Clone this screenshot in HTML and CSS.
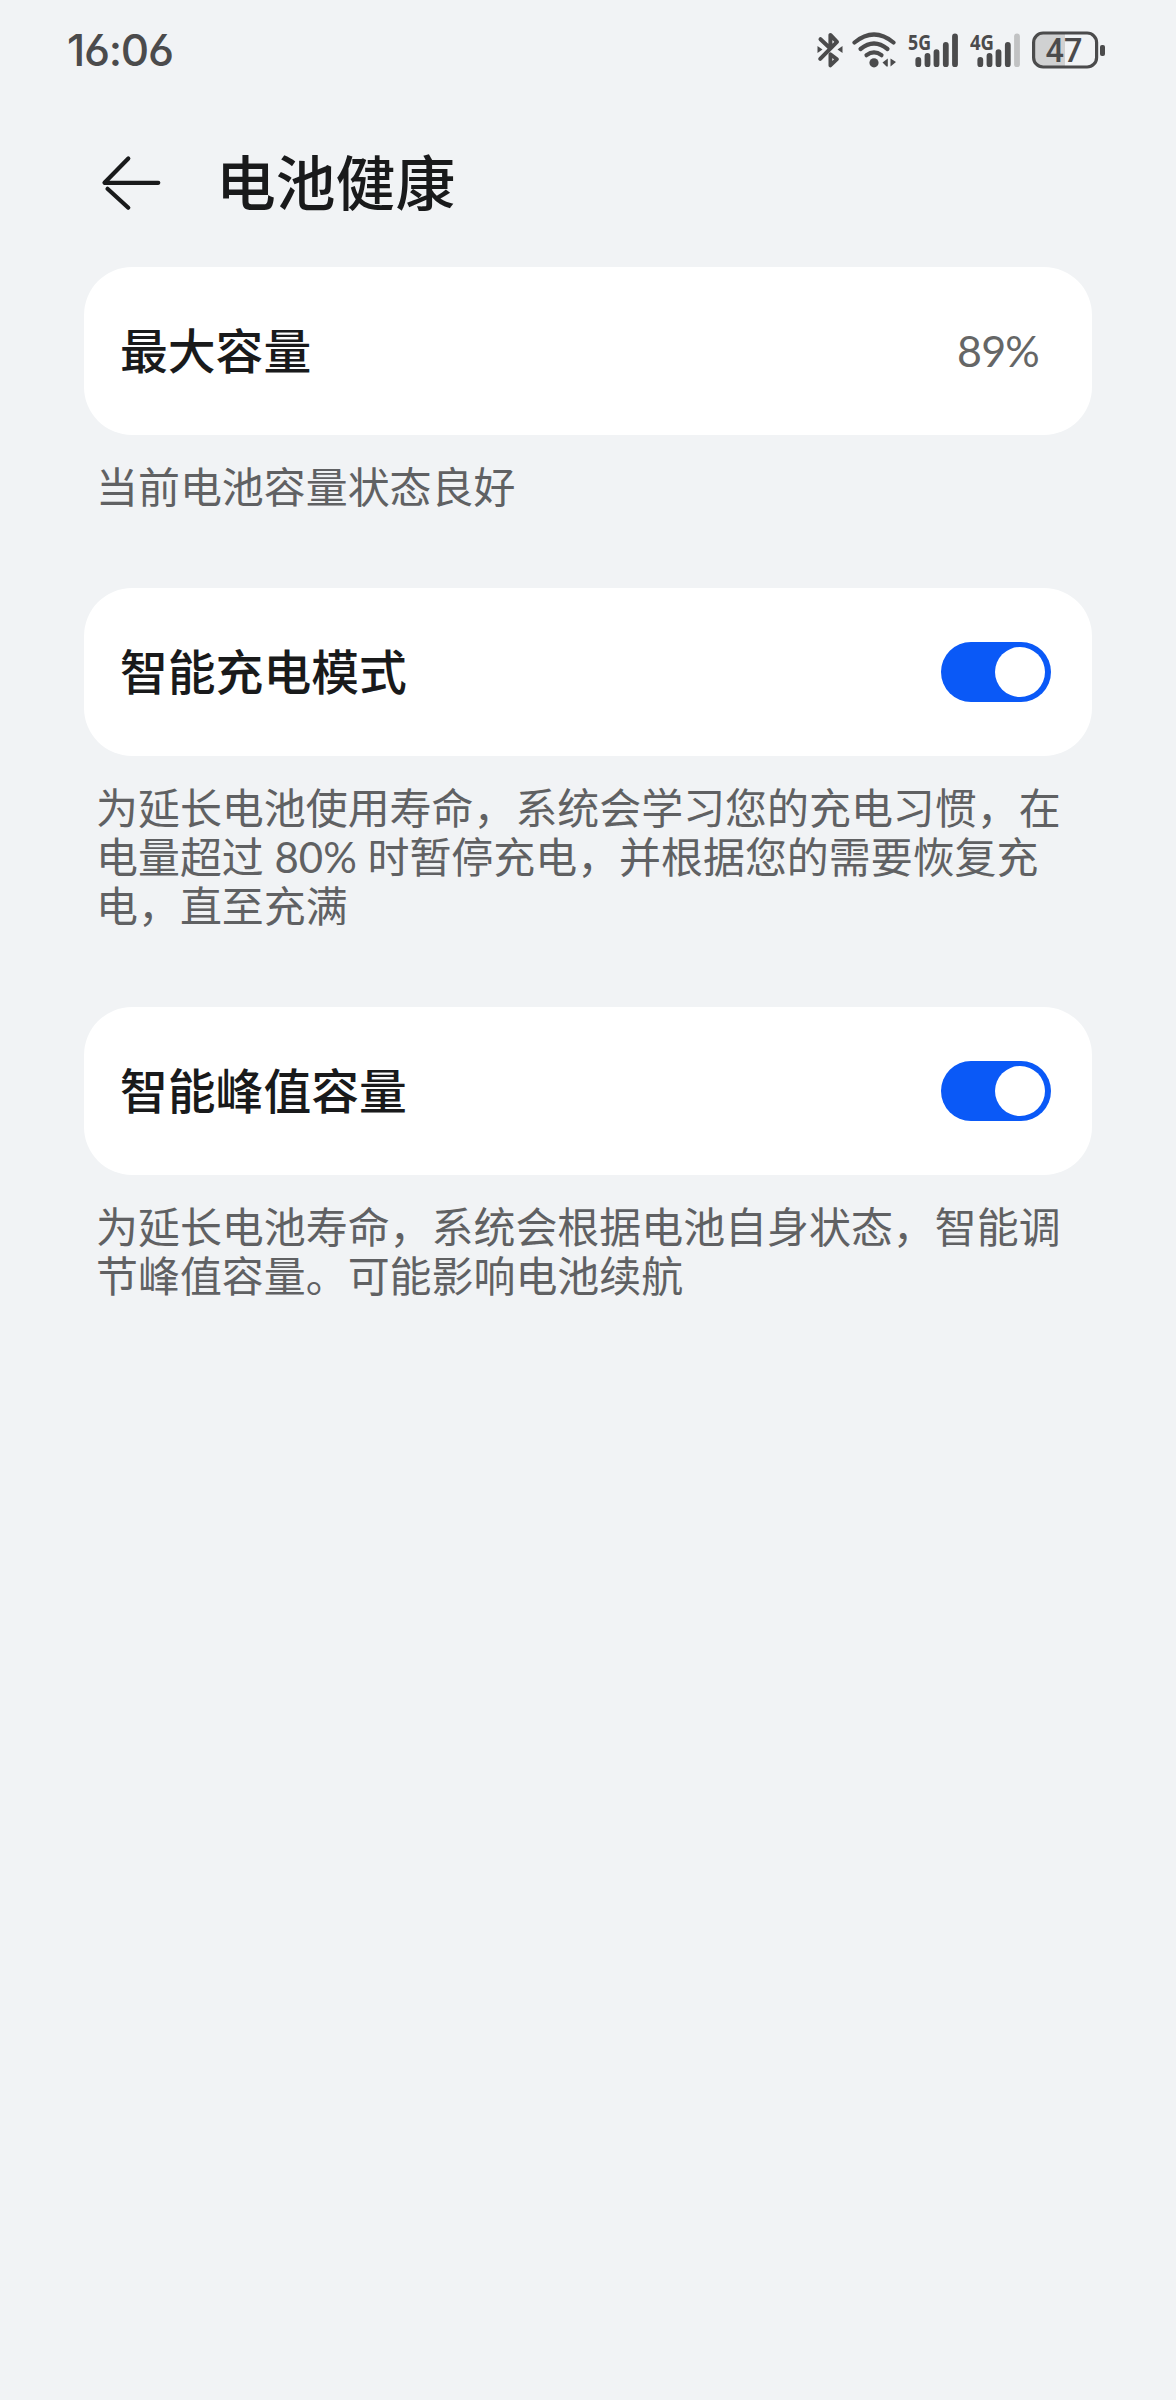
FILE: index.html
```html
<!DOCTYPE html>
<html lang="zh-CN">
<head>
<meta charset="utf-8">
<title>电池健康</title>
<link rel="stylesheet" href="styles.css">
</head>
<body>
<div class="screen">
  <header class="status-bar">
    <span class="clock">16:06</span>
    <div class="status-icons">
      <svg class="icon-bluetooth" width="26" height="38" viewBox="0 0 26 38">
        <path d="M3.200 27.800 L20 10.800 L13.400 4 V17 M3.500 8.200 L12 16.200" fill="none" stroke="#4b4b4c" stroke-width="4" stroke-linecap="round" stroke-linejoin="round"/>
        <path d="M13.400 23.200 L20 28.200 L13.400 34.400 Z" fill="none" stroke="#4b4b4c" stroke-width="3.800" stroke-linejoin="round"/>
        <path d="M0.500 15 L5.500 18.500 L0.500 22 Z M25.500 15 L20.500 18.500 L25.500 22 Z" fill="#4b4b4c"/>
      </svg>
      <svg class="icon-wifi" width="46" height="38" viewBox="0 0 46 38">
        <g fill="none" stroke="#4b4b4c" stroke-width="4.200" stroke-linecap="round">
          <path d="M2.500 11.500 Q22 -4.500 41.500 11.500"/>
          <path d="M8.500 18 Q22 7 35.500 18"/>
          <path d="M14.500 24.200 Q22 18.500 29.500 24.200"/>
        </g>
        <circle cx="22" cy="31.800" r="4.600" fill="#4b4b4c"/>
        <path d="M35.800 27.500 V35.500 H34.500 L30.500 31.500 Z M38.500 27.500 V35.500 L44 31 Z" fill="#4b4b4c"/>
      </svg>
      <svg class="icon-signal" width="52" height="54" viewBox="0 -8 52 54">
        <text class="network" x="0" y="18.500" textLength="23" lengthAdjust="spacingAndGlyphs">5G</text>
        <path d="M10.300 29 V33.200 M19.500 25 V33.200 M28.500 21.200 V33.200 M37.800 14 V33.200 M47 5.500 V33.200" stroke="#4b4b4c" stroke-width="5.800" stroke-linecap="round"/>
      </svg>
      <svg class="icon-signal" width="52" height="54" viewBox="0 -8 52 54">
        <text class="network" x="0" y="18.500" textLength="24" lengthAdjust="spacingAndGlyphs">4G</text>
        <g stroke="#4b4b4c" stroke-width="5.800" stroke-linecap="round">
          <path d="M10.300 29 V33.200 M19.500 25 V33.200 M28.500 21.200 V33.200 M37.800 14 V33.200"/>
          <path d="M47 5.500 V33.200" stroke="#c1c2c3"/>
        </g>
      </svg>
      <svg class="icon-battery" width="74" height="46" viewBox="0 -4 74 46">
        <path d="M33 2.500 H12 Q2 2.500 2 12.500 V26 Q2 36 12 36 H33 Z" fill="#d0d1d2"/>
        <rect x="1.600" y="2" width="63" height="34" rx="9.500" fill="none" stroke="#4b4b4c" stroke-width="3.200"/>
        <rect x="68" y="14" width="5" height="11" rx="2" fill="#4b4b4c"/>
        <text class="battery-level" x="32" y="30.500" text-anchor="middle">47</text>
      </svg>
    </div>
  </header>

  <div class="title-bar">
    <svg class="icon-back" width="60" height="56" viewBox="0 0 60 56">
      <path d="M27.300 3.500 L3.500 27.800 H57.300 M6.500 33.800 L27.300 52.700" fill="none" stroke="#191a1b" stroke-width="4.200" stroke-linecap="round" stroke-linejoin="round"/>
    </svg>
    <h1 class="title">电池健康</h1>
  </div>

  <main class="settings">
    <section class="group">
      <div class="card">
        <span class="label">最大容量</span>
        <span class="value">89%</span>
      </div>
      <p class="note">当前电池容量状态良好</p>
    </section>
    <section class="group">
      <div class="card">
        <span class="label">智能充电模式</span>
        <span class="switch"><span class="knob"></span></span>
      </div>
      <p class="note">为延长电池使用寿命，系统会学习您的充电习惯，在电量超过 80% 时暂停充电，并根据您的需要恢复充电，直至充满</p>
    </section>
    <section class="group">
      <div class="card">
        <span class="label">智能峰值容量</span>
        <span class="switch"><span class="knob"></span></span>
      </div>
      <p class="note">为延长电池寿命，系统会根据电池自身状态，智能调节峰值容量。可能影响电池续航</p>
    </section>
  </main>
</div>
</body>
</html>
```
FILE: styles.css
```css
* {
  box-sizing: border-box;
}

body {
  margin: 0;
  background: #f1f3f5;
  color: #191a1b;
  font-family: "Noto Sans CJK SC", sans-serif;
}

.screen {
  width: 1176px;
  min-height: 2400px;
}

.status-bar {
  display: flex;
  align-items: center;
  justify-content: space-between;
  height: 99px;
  padding: 0 70px 0 67px;
}

.clock {
  font: 500 44px/50px Inter, sans-serif;
  font-feature-settings: "cv03", "cv04";
  letter-spacing: -1.300px;
  color: #4b4b4c;
}

.status-icons {
  display: flex;
  align-items: center;
}

.icon-wifi {
  margin-left: 9px;
}

.icon-signal {
  margin-left: 10px;
}

.icon-battery {
  margin-left: 10px;
}

.network {
  font: 700 22px "Open Sans", sans-serif;
  fill: #4b4b4c;
}

.battery-level {
  font: 500 32.500px Roboto, sans-serif;
  fill: #4b4b4c;
}

.title-bar {
  display: flex;
  align-items: center;
  gap: 55px;
  height: 168px;
  padding: 0 101px;
}

.title {
  margin: 0;
  padding-bottom: 7px;
  font-size: 59.800px;
  font-weight: 500;
  line-height: 80px;
}

.settings {
  display: flex;
  flex-direction: column;
  gap: 76px;
  padding: 0 84px;
}

.card {
  display: flex;
  align-items: center;
  justify-content: space-between;
  height: 168px;
  padding: 0 41px 0 36px;
  border-radius: 48px;
  background: #fff;
}

.label {
  padding-bottom: 5px;
  font-size: 47.800px;
  font-weight: 500;
  line-height: 60px;
}

.value {
  margin-right: 12px;
  font: 400 43px/60px Lato, sans-serif;
  letter-spacing: -0.800px;
  color: #656666;
}

.switch {
  display: flex;
  justify-content: flex-end;
  width: 110px;
  height: 60px;
  padding: 5px 6px;
  border-radius: 30px;
  background: #0a59f7;
}

.knob {
  width: 50px;
  height: 50px;
  border-radius: 50%;
  background: #fff;
}

.note {
  margin: 28px 0 0;
  padding: 0 12px;
  font-family: Lato, "Noto Sans CJK SC", sans-serif;
  font-size: 41.950px;
  line-height: 49px;
  color: #606163;
}
```
